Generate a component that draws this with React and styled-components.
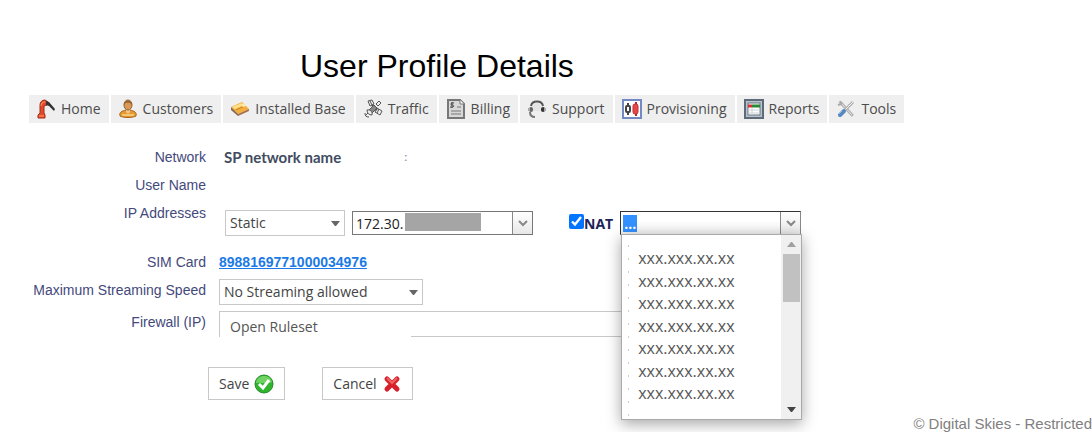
import React from 'react';
import styled, { createGlobalStyle, css } from 'styled-components';

const GlobalStyle = createGlobalStyle`
  * {
    box-sizing: border-box;
  }

  body {
    margin: 0;
    background-color: #fff;
    font-family: 'Open Sans', 'Noto Sans', sans-serif;
    font-size: 14px;
    color: #444;
  }

  input, select, button {
    font: inherit;
    color: inherit;
  }
`;

const Page = styled.div`
  min-height: 100vh;
  display: flex;
  flex-direction: column;
`;

const Title = styled.h1`
  margin: 0;
  padding: 48px 0 11px 300px;
  font-family: 'Liberation Sans', Arial, sans-serif;
  font-size: 32px;
  line-height: 36px;
  font-weight: 400;
  color: #000;
`;

const Nav = styled.nav`
  display: flex;
  gap: 2px;
  padding-left: 29px;
`;

const NavLink = styled.a`
  display: flex;
  align-items: center;
  gap: 5px;
  height: 28px;
  padding: 0 8px 1px 7px;
  background-color: #efefef;
  color: #4c4c4c;
  text-decoration: none;
  white-space: nowrap;
`;

const Icon = styled.svg`
  flex: none;
  width: 20px;
  height: 20px;
`;

const Form = styled.form`
  padding: 20px 0 0 28px;
`;

const Row = styled.div`
  display: grid;
  grid-template-columns: 178px 1fr;
  column-gap: 13px;
  align-items: start;
  min-height: ${({ $height }) => $height || 28}px;
`;

const labelText = css`
  font-family: 'Liberation Sans', Arial, sans-serif;
  font-size: 14px;
  line-height: 28px;
  text-align: right;
  white-space: nowrap;
  color: #44497c;
`;

const Label = styled.label`
  ${labelText}
`;

const Caption = styled.span`
  ${labelText}
`;

const NetworkName = styled.div`
  display: flex;
  gap: 63px;
  padding-left: 5px;
  font-family: Lato, sans-serif;
  font-size: 15px;
  font-weight: 700;
  line-height: 28px;
  color: #414c60;
`;

const Remark = styled.span`
  font-size: 12px;
  font-weight: 400;
  color: #7d8da5;
`;

const SimLink = styled.a`
  font-family: 'Liberation Sans', Arial, sans-serif;
  font-weight: 700;
  line-height: 28px;
  color: #1b7ae6;
`;

const AddressFields = styled.div`
  display: flex;
  align-items: center;
  padding: 11px 0 0 6px;
`;

const SelectBox = styled.div`
  display: grid;
  align-items: center;
  width: ${({ $width }) => $width}px;
  margin-top: ${({ $top }) => $top || 0}px;

  > * {
    grid-area: 1 / 1;
  }
`;

const Select = styled.select`
  appearance: none;
  width: 100%;
  height: 26px;
  padding: 0 4px 1px;
  border: 1px solid #c8c8c8;
  border-radius: 0;
  background-color: #fff;
`;

const RulesetSelect = styled(Select)`
  padding: 4px 10px 0;
  border-bottom: 0;
  background: linear-gradient(#c8c8c8, #c8c8c8) 191px 100% / 100% 1px no-repeat #fff;
  color: #555;
`;

const Caret = styled.svg`
  justify-self: end;
  width: 9px;
  height: 5px;
  margin-right: 5px;
  fill: #666;
  pointer-events: none;
`;

const Combo = styled.div`
  position: relative;
  display: flex;
  align-items: center;
  width: 181px;
  height: 24px;
  margin-left: ${({ $gap }) => $gap}px;
  border: 1px solid #777;
  border-color: ${({ $open }) => ($open ? '#333 #888 #aaa #333' : '#777')};
  background: ${({ $open }) => ($open ? 'linear-gradient(#fff 40%, #f0f0f0)' : '#fff')};
`;

const ComboInput = styled.input`
  width: 52px;
  height: 22px;
  padding: 0 0 0 3px;
  border: 0;
  outline: 0;
  background: transparent;
  color: #222;
`;

const SelectedInput = styled(ComboInput)`
  background: linear-gradient(#3390ff, #3390ff) 2px 3px / 14px 17px no-repeat;
  font-weight: 700;
  color: #fff;
`;

const Redacted = styled.span`
  width: 76px;
  height: 18px;
  margin-bottom: 2px;
  background-color: #a5a5a5;
`;

const ComboButton = styled.button`
  display: flex;
  align-items: center;
  justify-content: center;
  width: 20px;
  height: 22px;
  margin-left: auto;
  padding: 0;
  border: 0;
  border-left: 1px solid #888;
  background: linear-gradient(#fff, #e8e8e8);
`;

const Check = styled.input`
  width: 15px;
  height: 15px;
  margin: 0 0 4px 36px;
  accent-color: #0075ff;
`;

const CheckLabel = styled.label`
  font-weight: 700;
  color: #1c2458;
`;

const Popup = styled.div`
  position: absolute;
  top: 22px;
  left: 0;
  display: flex;
  width: 181px;
  height: 186px;
  border: 1px solid #aaa;
  background-color: #fff;
  box-shadow: 0 4px 14px rgba(0, 0, 0, 0.35);
  z-index: 1;
`;

const Options = styled.ul`
  flex: 1;
  display: flex;
  flex-direction: column;
  justify-content: space-between;
  margin: 0;
  padding: 12px 0 15px 16px;
  background: radial-gradient(circle, #ccc 0, #ccc 1px, transparent 1px) 5px 4px / 3px 13px repeat-y;
  list-style: none;
`;

const Option = styled.li`
  font-size: 16px;
  line-height: 22px;
  color: #555;
`;

const Scrollbar = styled.div`
  display: flex;
  flex-direction: column;
  align-items: center;
  width: 20px;
  padding: 7px 0;
  background-color: #f0f0f0;
`;

const Thumb = styled.div`
  width: 17px;
  height: 48px;
  margin: 7px 0 auto;
  background-color: #c1c1c1;
`;

const Arrow = styled.svg`
  width: 9px;
  height: 5px;
  fill: ${({ $color }) => $color};
`;

const Actions = styled.div`
  display: flex;
  gap: 37px;
  padding-left: 180px;
`;

const ActionButton = styled.button`
  display: flex;
  align-items: center;
  gap: 5px;
  height: 33px;
  padding: 0 10px;
  border: 1px solid #c8c8c8;
  background-color: #fff;
  color: #444;
`;

const Footer = styled.footer`
  margin-top: auto;
  font-family: 'Liberation Sans', Arial, sans-serif;
  font-size: 15px;
  line-height: 17px;
  text-align: right;
  color: #808080;
`;

const HomeIcon = () => (
  <Icon viewBox="0 0 20 20">
    <path d="M2 19V16L4 14V6C4 3 6 1 9 1L12 3L11 6L8 7V14L9 16V19Z" fill="#e14a2b" stroke="#9d2e1b" />
    <path d="M5 7C5 4 7 3 9 3" fill="none" stroke="#ff9a78" />
    <path d="M10 2L13 3L19 10L18 12L13 7L10 6Z" fill="#333" />
    <path d="M3 17H8" stroke="#ff7043" strokeWidth="2" />
  </Icon>
);

const CustomersIcon = () => (
  <Icon viewBox="0 0 20 20">
    <path d="M2 17C1 13 4 12 8 11H12C16 12 19 13 18 17C14 19 6 19 2 17Z" fill="#e39a35" stroke="#a9621a" />
    <path d="M8 10H12V13L10 15L8 13Z" fill="#f3c58c" />
    <ellipse cx="10" cy="6" rx="4" ry="5" fill="#d99a58" stroke="#93602c" />
    <path d="M6 6C5 0 15 0 14 6C12 5 12 3 10 4C8 3 7 5 6 6Z" fill="#996633" />
    <path d="M4 16H16" stroke="#f8c56b" strokeWidth="2" />
  </Icon>
);

const InstalledIcon = () => (
  <Icon viewBox="0 0 20 20">
    <path d="M1 8L12 3L19 10L8 15Z" fill="#f2b03d" />
    <path d="M1 8L8 15V17L1 11Z" fill="#8b6650" />
    <path d="M8 15L19 10V12L8 17Z" fill="#a87049" />
    <path d="M2 8L12 4L14 6L5 10Z" fill="#ffe18a" />
    <path d="M6 11L15 7" stroke="#d78328" />
    <path d="M12 6L14 5L16 7L13 8Z" fill="#fff3bd" />
  </Icon>
);

const TrafficIcon = () => (
  <Icon viewBox="0 0 20 20" fill="#eee" stroke="#555">
    <path d="M5 2L9 1L11 5L7 7ZM14 9L19 12L17 16L12 13Z" />
    <path d="M7 2L9 6M16 10L14 14" />
    <path d="M9 6L14 11" strokeWidth="2" />
    <path d="M13 5L16 2L18 4L15 7Z" />
    <path d="M11 6L14 9L9 14L6 11Z" fill="#888" />
    <path d="M4 11C7 10 10 13 9 16C6 16 4 14 4 11Z" />
    <path d="M5 14L2 17M2 14C2 17 3 18 6 18" fill="none" />
  </Icon>
);

const BillingIcon = () => (
  <Icon viewBox="0 0 20 20">
    <path d="M2 1H14L18 5V19H2Z" fill="#d8d8d8" stroke="#777" strokeWidth="2" />
    <path d="M14 1V5H18" fill="#fff" stroke="#777" />
    <path d="M8 4C5 3 4 6 6 6C9 6 8 9 4 8M6 3V9" fill="none" stroke="#444" />
    <path d="M11 8H15M5 12H15M5 15H15" stroke="#777" />
  </Icon>
);

const SupportIcon = () => (
  <Icon viewBox="0 0 20 20">
    <path d="M6 7C7 3 13 3 14 7V12H6Z" fill="#e4e4e4" />
    <path d="M4 7C5 1 15 1 16 7" fill="none" stroke="#555" strokeWidth="2" />
    <rect x="2" y="8" width="4" height="5" rx="2" fill="#666" />
    <rect x="14" y="8" width="4" height="5" rx="2" fill="#333" />
    <path d="M2 9V12M18 9V12" stroke="#aaa" strokeWidth="2" />
    <path d="M3 13C3 16 5 18 8 18" fill="none" stroke="#777" strokeWidth="2" />
  </Icon>
);

const ProvisioningIcon = () => (
  <Icon viewBox="0 0 20 20">
    <rect x="1" y="1" width="18" height="18" fill="#fff" stroke="#7289c2" strokeWidth="2" />
    <path d="M6 4V7M6 13V16" stroke="#444" strokeWidth="2" />
    <rect x="4" y="7" width="4" height="6" rx="1" fill="#fff" stroke="#444" strokeWidth="2" />
    <path d="M14 3V17" stroke="#b52525" strokeWidth="2" />
    <rect x="11" y="5" width="5" height="10" rx="2" fill="#e44747" stroke="#c43030" />
  </Icon>
);

const ReportsIcon = () => (
  <Icon viewBox="0 0 20 20">
    <rect x="1" y="1" width="18" height="18" fill="#b8c3ce" stroke="#5d6b78" strokeWidth="2" />
    <rect x="4" y="4" width="12" height="12" fill="#fff" stroke="#667580" />
    <path d="M4 7H8" stroke="#d63434" strokeWidth="3" />
    <path d="M8 7H16" stroke="#298736" strokeWidth="3" />
    <path d="M4 11H16M4 14H16M8 9V16" stroke="#ccd3d8" />
  </Icon>
);

const ToolsIcon = () => (
  <Icon viewBox="0 0 20 20">
    <path d="M5 4L16 16" fill="none" stroke="#b0b0b0" strokeWidth="3" strokeLinecap="round" />
    <path d="M5 4L16 16" stroke="#e3e3e3" />
    <path d="M4 2L5 5L2 6" fill="none" stroke="#aaa" strokeWidth="2" />
    <path d="M8 12L17 3" stroke="#b0b0b0" strokeWidth="3" />
    <path d="M8 12L17 3" stroke="#eee" />
    <path d="M4 16L8 12" stroke="#5587c0" strokeWidth="4" strokeLinecap="round" />
    <path d="M3 15L6 12" stroke="#91b9de" />
  </Icon>
);

const SaveIcon = () => (
  <Icon viewBox="0 0 20 20">
    <circle cx="10" cy="10" r="9" fill="#2fb52d" stroke="#23892b" />
    <path d="M2 9C3 0 16 0 18 8C13 11 8 8 2 9Z" fill="#6ed360" />
    <path d="M5 10L9 14L15 6" fill="none" stroke="#fff" strokeWidth="3" />
  </Icon>
);

const CancelIcon = () => (
  <Icon viewBox="0 0 20 20">
    <path d="M5 5L15 15M15 5L5 15" fill="none" stroke="#d8202a" strokeWidth="5" strokeLinecap="round" />
    <path d="M5 4L10 9L15 4" fill="none" stroke="#ee6560" strokeWidth="2" />
  </Icon>
);

const Chevron = () => (
  <svg width="10" height="7" viewBox="0 0 10 7">
    <path d="M1 1L5 5L9 1" fill="none" stroke="#888" strokeWidth="2" />
  </svg>
);

const SelectCaret = () => (
  <Caret viewBox="0 0 9 5"><path d="M0 0H9L5 5H4Z" /></Caret>
);

const menu = [
  { title: 'Home', icon: HomeIcon },
  { title: 'Customers', icon: CustomersIcon },
  { title: 'Installed Base', icon: InstalledIcon },
  { title: 'Traffic', icon: TrafficIcon },
  { title: 'Billing', icon: BillingIcon },
  { title: 'Support', icon: SupportIcon },
  { title: 'Provisioning', icon: ProvisioningIcon },
  { title: 'Reports', icon: ReportsIcon },
  { title: 'Tools', icon: ToolsIcon },
];

const addresses = Array(7).fill('xxx.xxx.xx.xx');

const NatPopup = () => (
  <Popup>
    <Options role="listbox" aria-label="NAT addresses">
      {addresses.map((address, i) => (
        <Option key={i} role="option">{address}</Option>
      ))}
    </Options>
    <Scrollbar>
      <Arrow viewBox="0 0 9 5" $color="#a0a0a0"><path d="M0 5H9L5 0H4Z" /></Arrow>
      <Thumb />
      <Arrow viewBox="0 0 9 5" $color="#444"><path d="M0 0H9L5 5H4Z" /></Arrow>
    </Scrollbar>
  </Popup>
);

const App = () => (
  <Page>
    <GlobalStyle />
    <Title>User Profile Details</Title>
    <Nav>
      {menu.map(({ title, icon: MenuIcon }) => (
        <NavLink key={title} href="#"><MenuIcon />{title}</NavLink>
      ))}
    </Nav>
    <Form>
      <Row>
        <Caption>Network</Caption>
        <NetworkName>SP network name<Remark>:</Remark></NetworkName>
      </Row>
      <Row>
        <Caption>User Name</Caption>
      </Row>
      <Row $height={49}>
        <Label htmlFor="ip-mode">IP Addresses</Label>
        <AddressFields>
          <SelectBox $width={120}>
            <Select id="ip-mode"><option>Static</option></Select>
            <SelectCaret />
          </SelectBox>
          <Combo $gap={7}>
            <ComboInput aria-label="IP address" defaultValue="172.30." />
            <Redacted />
            <ComboButton type="button" aria-label="Show addresses"><Chevron /></ComboButton>
          </Combo>
          <Check id="nat" type="checkbox" defaultChecked />
          <CheckLabel htmlFor="nat">NAT</CheckLabel>
          <Combo $gap={7} $open>
            <SelectedInput aria-label="NAT address" defaultValue="..." />
            <ComboButton type="button" aria-label="Show NAT addresses"><Chevron /></ComboButton>
            <NatPopup />
          </Combo>
        </AddressFields>
      </Row>
      <Row>
        <Caption>SIM Card</Caption>
        <div><SimLink href="#">8988169771000034976</SimLink></div>
      </Row>
      <Row $height={32}>
        <Label htmlFor="speed">Maximum Streaming Speed</Label>
        <SelectBox $width={204} $top={3}>
          <Select id="speed"><option>No Streaming allowed</option></Select>
          <SelectCaret />
        </SelectBox>
      </Row>
      <Row $height={59}>
        <Label htmlFor="ruleset">Firewall (IP)</Label>
        <SelectBox $width={560} $top={3}>
          <RulesetSelect id="ruleset"><option>Open Ruleset</option></RulesetSelect>
        </SelectBox>
      </Row>
      <Actions>
        <ActionButton type="button">Save<SaveIcon /></ActionButton>
        <ActionButton type="button">Cancel<CancelIcon /></ActionButton>
      </Actions>
    </Form>
    <Footer>© Digital Skies - Restricted</Footer>
  </Page>
);

export default App;
